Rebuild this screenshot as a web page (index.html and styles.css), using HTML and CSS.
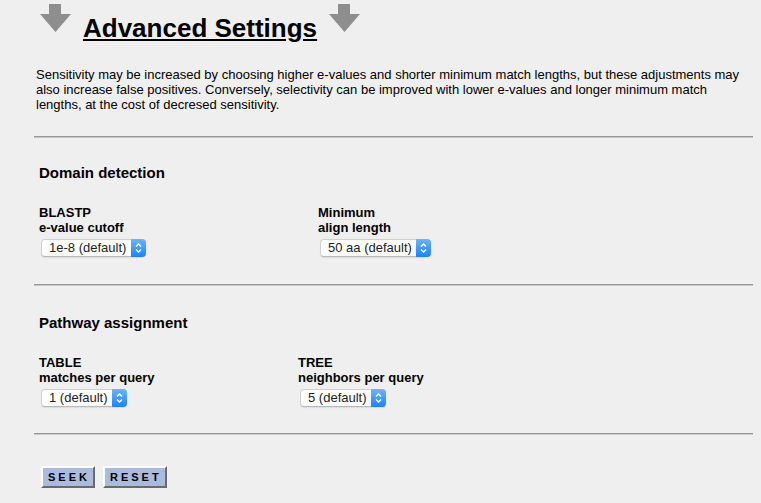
FILE: index.html
```html
<!DOCTYPE html>
<html lang="en">

<head>
    <meta charset="UTF-8">
    <meta name="viewport" content="width=device-width, initial-scale=1.0">
    <link rel="stylesheet" href="styles.css">
    <title>Advanced Settings</title>
</head>

<body>
    <div class="title-bar">
        <svg class="arrow" width="31" height="28" viewBox="0 0 31 28">
            <rect x="9" y="0" width="12" height="11" />
            <polygon points="0,10 31,10 15.5,28" />
        </svg>
        <h1>Advanced Settings</h1>
        <svg class="arrow" width="31" height="28" viewBox="0 0 31 28">
            <rect x="9" y="0" width="12" height="11" />
            <polygon points="0,10 31,10 15.5,28" />
        </svg>
    </div>

    <form class="settings" onsubmit="return false">
        <p class="intro">Sensitivity may be increased by choosing higher e-values and shorter minimum match lengths, but these adjustments may also increase false positives. Conversely, selectivity can be improved with lower e-values and longer minimum match lengths, at the cost of decresed sensitivity.</p>
        <hr>

        <div class="group">
            <h2>Domain detection</h2>
            <div class="fields fields-domain">
                <div class="field">
                    <label for="evalue">BLASTP<br>e-value cutoff</label>
                    <span class="select-wrap">
                        <select id="evalue">
                            <option selected>1e-8 (default)</option>
                            <option>1e-2</option>
                            <option>1e-4</option>
                            <option>1e-6</option>
                            <option>1e-10</option>
                        </select>
                        <span class="stepper"><svg width="15" height="18" viewBox="0 0 15 18"><path d="M5 7.5 L7.5 5 L10 7.5 M5 10.5 L7.5 13 L10 10.5" /></svg></span>
                    </span>
                </div>
                <div class="field">
                    <label for="alignlen">Minimum<br>align length</label>
                    <span class="select-wrap">
                        <select id="alignlen">
                            <option>30 aa</option>
                            <option>40 aa</option>
                            <option selected>50 aa (default)</option>
                            <option>60 aa</option>
                            <option>70 aa</option>
                        </select>
                        <span class="stepper"><svg width="15" height="18" viewBox="0 0 15 18"><path d="M5 7.5 L7.5 5 L10 7.5 M5 10.5 L7.5 13 L10 10.5" /></svg></span>
                    </span>
                </div>
            </div>
        </div>
        <hr>

        <div class="group group-pathway">
            <h2>Pathway assignment</h2>
            <div class="fields fields-pathway">
                <div class="field">
                    <label for="tablematches">TABLE<br>matches per query</label>
                    <span class="select-wrap">
                        <select id="tablematches">
                            <option selected>1 (default)</option>
                            <option>2</option>
                            <option>3</option>
                            <option>5</option>
                        </select>
                        <span class="stepper"><svg width="15" height="18" viewBox="0 0 15 18"><path d="M5 7.5 L7.5 5 L10 7.5 M5 10.5 L7.5 13 L10 10.5" /></svg></span>
                    </span>
                </div>
                <div class="field">
                    <label for="treeneighbors">TREE<br>neighbors per query</label>
                    <span class="select-wrap">
                        <select id="treeneighbors">
                            <option>1</option>
                            <option>3</option>
                            <option selected>5 (default)</option>
                            <option>10</option>
                        </select>
                        <span class="stepper"><svg width="15" height="18" viewBox="0 0 15 18"><path d="M5 7.5 L7.5 5 L10 7.5 M5 10.5 L7.5 13 L10 10.5" /></svg></span>
                    </span>
                </div>
            </div>
        </div>
        <hr>

        <div class="actions">
            <button type="submit" class="btn">SEEK</button>
            <button type="reset" class="btn">RESET</button>
        </div>
    </form>
</body>

</html>
```

FILE: styles.css
```css
body {
    font-family: 'Liberation Sans', Arial, sans-serif;
    background-color: #efefef;
    color: #000;
    margin: 0;
    padding: 0;
}

.title-bar {
    display: flex;
    align-items: flex-start;
    padding: 4px 0 0 40px;
}

.arrow {
    display: block;
    fill: #8e8e8e;
}

h1 {
    font-size: 26px;
    font-weight: bold;
    line-height: 30px;
    text-decoration: underline;
    margin: 9px 12px 0 12px;
}

.settings {
    width: 719px;
    margin: 24px 0 0 34px;
}

.intro {
    font-size: 13px;
    line-height: 15px;
    margin: 0;
    padding: 0 2px;
}

hr {
    margin: 0;
    height: 0;
    border: 0;
    border-top: 1px solid #959595;
    border-bottom: 1px solid #c8c8c8;
}

.intro + hr {
    margin-top: 24px;
}

.group {
    padding: 26px 5px 27px 5px;
}

.group-pathway {
    padding-top: 28px;
    padding-bottom: 26px;
}

h2 {
    font-size: 15px;
    font-weight: bold;
    line-height: 18px;
    margin: 0 0 23px 0;
}

.fields {
    display: grid;
    align-items: start;
}

.fields-domain {
    grid-template-columns: 279px auto;
}

.fields-pathway {
    grid-template-columns: 259px auto;
}

.field label {
    display: block;
    font-size: 13px;
    font-weight: bold;
    line-height: 15px;
    margin-bottom: 3px;
}

.select-wrap {
    position: relative;
    display: inline-block;
    margin-left: 2px;
}

.select-wrap select {
    -webkit-appearance: none;
    appearance: none;
    display: block;
    height: 18px;
    font-family: 'Liberation Sans', Arial, sans-serif;
    font-size: 13px;
    line-height: 16px;
    color: #222;
    background-color: #fff;
    border: 1px solid #d0d0d0;
    border-bottom-color: #b8b8b8;
    border-radius: 4px;
    padding: 0 18px 0 7px;
    box-shadow: 0 1px 1px rgba(0, 0, 0, 0.08);
}

.stepper {
    position: absolute;
    top: 0;
    right: 0;
    width: 15px;
    height: 18px;
    border-radius: 0 4px 4px 0;
    background: linear-gradient(#6db4fb, #1a84fd);
    pointer-events: none;
}

.stepper svg {
    display: block;
    fill: none;
    stroke: #fff;
    stroke-width: 1.3;
}

.actions {
    display: flex;
    gap: 8px;
    padding: 31px 0 0 7px;
}

.btn {
    font-family: 'Liberation Sans', Arial, sans-serif;
    font-size: 11px;
    font-weight: bold;
    letter-spacing: 3px;
    color: #000;
    background-color: #aabbde;
    height: 22px;
    padding: 0 3px 0 5px;
    border: 2px solid;
    border-color: #fff #6a6a6a #6a6a6a #fff;
    border-radius: 0;
    cursor: pointer;
}
```
